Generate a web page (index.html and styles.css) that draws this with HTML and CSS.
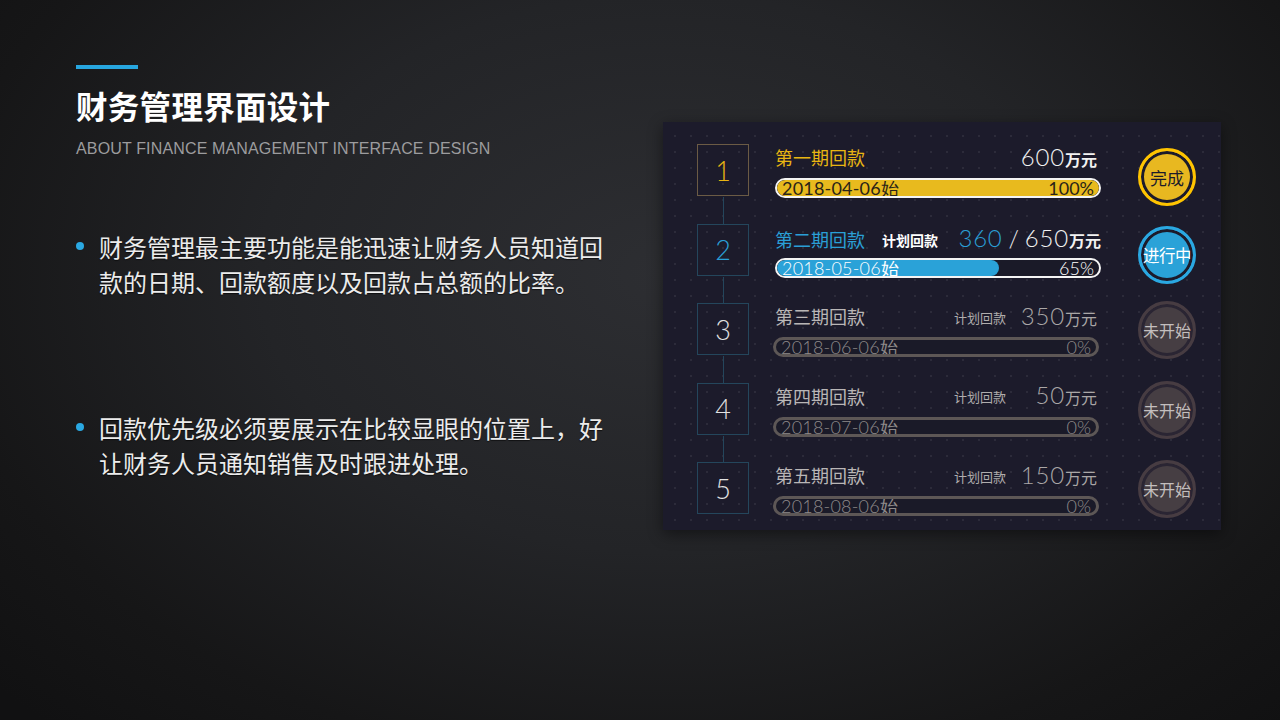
FILE: index.html
```html
<!DOCTYPE html>
<html lang="zh">
<head>
<meta charset="utf-8">
<title>财务管理界面设计</title>
<link rel="stylesheet" href="styles.css">
</head>
<body>
<div class="slide">
  <section class="left">
    <div class="accent"></div>
    <h1 class="title">财务管理界面设计</h1>
    <p class="subtitle">ABOUT FINANCE MANAGEMENT INTERFACE DESIGN</p>
    <ul class="points">
      <li class="point">财务管理最主要功能是能迅速让财务人员知道回款的日期、回款额度以及回款占总额的比率。</li>
      <li class="point">回款优先级必须要展示在比较显眼的位置上，好让财务人员通知销售及时跟进处理。</li>
    </ul>
  </section>
  <section class="card">
    <div class="row done">
      <div class="step">1</div>
      <div class="info">
        <div class="head">
          <span class="name">第一期回款</span>
          <span class="amount"><span class="num">600</span><span class="unit">万元</span></span>
        </div>
        <div class="bar"><div class="fill" style="width:100%"></div><span class="date">2018-04-06始</span><span class="pct">100%</span></div>
      </div>
      <div class="status">完成</div>
    </div>
    <div class="row doing">
      <div class="step">2</div>
      <div class="info">
        <div class="head">
          <span class="name">第二期回款</span>
          <span class="plan">计划回款</span>
          <span class="amount"><span class="num cur">360</span><span class="num slash">/</span><span class="num">650</span><span class="unit">万元</span></span>
        </div>
        <div class="bar"><div class="fill" style="width:69%"></div><span class="date">2018-05-06始</span><span class="pct">65%</span></div>
      </div>
      <div class="status">进行中</div>
    </div>
    <div class="row todo">
      <div class="step">3</div>
      <div class="info">
        <div class="head">
          <span class="name">第三期回款</span>
          <span class="plan">计划回款</span>
          <span class="amount"><span class="num">350</span><span class="unit">万元</span></span>
        </div>
        <div class="bar"><span class="date">2018-06-06始</span><span class="pct">0%</span></div>
      </div>
      <div class="status">未开始</div>
    </div>
    <div class="row todo">
      <div class="step">4</div>
      <div class="info">
        <div class="head">
          <span class="name">第四期回款</span>
          <span class="plan">计划回款</span>
          <span class="amount"><span class="num">50</span><span class="unit">万元</span></span>
        </div>
        <div class="bar"><span class="date">2018-07-06始</span><span class="pct">0%</span></div>
      </div>
      <div class="status">未开始</div>
    </div>
    <div class="row todo last">
      <div class="step">5</div>
      <div class="info">
        <div class="head">
          <span class="name">第五期回款</span>
          <span class="plan">计划回款</span>
          <span class="amount"><span class="num">150</span><span class="unit">万元</span></span>
        </div>
        <div class="bar"><span class="date">2018-08-06始</span><span class="pct">0%</span></div>
      </div>
      <div class="status">未开始</div>
    </div>
  </section>
</div>
</body>
</html>
```

FILE: styles.css
```css
* { box-sizing: border-box; }
html, body { margin: 0; padding: 0; }
body {
  width: 1280px;
  height: 720px;
  overflow: hidden;
  font-family: "Noto Sans CJK SC", "Noto Sans", sans-serif;
  background: radial-gradient(ellipse 900px 620px at 52% 38%, #2d2e32 0%, #232427 45%, #161617 80%, #111112 100%);
  color: #eee;
}
.slide {
  display: flex;
  width: 1280px;
  height: 720px;
}
.left {
  width: 663px;
  padding: 65px 0 0 76px;
}
.accent {
  width: 62px;
  height: 4px;
  background: #27a6df;
}
.title {
  margin: 16px 0 0 0;
  font-size: 31.5px;
  line-height: 40px;
  font-weight: 700;
  color: #fff;
  letter-spacing: 0.3px;
}
.subtitle {
  margin: 14px 0 0 0;
  font-family: "Liberation Sans", Arial, sans-serif;
  font-size: 16px;
  line-height: 20px;
  color: #9c9c9e;
  letter-spacing: 0.15px;
}
.points {
  list-style: none;
  margin: 70px 0 0 0;
  padding: 0;
}
.point {
  position: relative;
  padding-left: 23px;
  width: 545px;
  font-size: 24px;
  line-height: 35px;
  color: #ececec;
  text-shadow: 0 1px 1px rgba(0,0,0,0.6);
  margin-bottom: 111px;
}
.point::before {
  content: "";
  position: absolute;
  left: 0;
  top: 13px;
  width: 8px;
  height: 8px;
  border-radius: 50%;
  background: #2aa8e2;
}
.card {
  margin-top: 122px;
  width: 558px;
  height: 408px;
  padding: 22px 0 0 34px;
  background-color: #1c1b2b;
  background-image: radial-gradient(circle, rgba(255,255,255,0.07) 1px, transparent 1.4px);
  background-size: 16px 16px;
  background-position: 4px 6px;
  box-shadow: 0 4px 14px rgba(0,0,0,0.45);
}
.row {
  display: flex;
  align-items: flex-start;
  height: 79.5px;
}
.step {
  position: relative;
  flex: none;
  width: 52px;
  height: 52px;
  border: 1px solid #24465c;
  display: flex;
  align-items: center;
  justify-content: center;
  font-family: "Lato", "Inter", sans-serif;
  font-weight: 300;
  font-size: 27px;
  color: #e2e2e2;
}
.step::after {
  content: "";
  position: absolute;
  left: 25px;
  top: 52px;
  width: 1px;
  height: 27px;
  background: #24465c;
}
.last .step::after { display: none; }
.done .step { border-color: #6b5b45; color: #e8b512; }
.doing .step { color: #2a9fd6; }
.info {
  width: 326px;
  margin-left: 26px;
}
.head {
  display: flex;
  align-items: center;
  height: 26px;
  margin-bottom: 8px;
}
.doing .head { margin-top: 2px; margin-bottom: 6px; }
.name {
  font-size: 18px;
  line-height: 26px;
  color: #b9b6b6;
}
.done .name { color: #e8b512; }
.doing .name { color: #2a9fd6; }
.plan {
  margin-left: auto;
  font-size: 13px;
  line-height: 26px;
  padding-top: 3px;
  color: #b0adad;
}
.doing .plan { margin-left: 17px; color: #fff; font-weight: 700; font-size: 14px; }
.amount {
  display: flex;
  align-items: baseline;
  justify-content: flex-end;
  width: 95px;
  padding-right: 4px;
}
.done .amount { margin-left: auto; width: auto; }
.doing .amount { margin-left: auto; padding-right: 0; width: auto; }
.num {
  font-family: "Lato", "Inter", sans-serif;
  font-weight: 300;
  font-size: 24px;
  line-height: 26px;
  letter-spacing: 0.8px;
  color: #aaa7a7;
}
.done .num, .doing .num { color: #f2f2f2; }
.doing .num.cur { color: #2a9fd6; }
.num.slash { margin: 0 5px 0 6px; }
.unit {
  font-size: 16px;
  color: #aaa7a7;
}
.done .unit, .doing .unit { color: #f2f2f2; font-weight: 700; }
.bar {
  position: relative;
  display: flex;
  align-items: center;
  justify-content: space-between;
  height: 20px;
  border: 2px solid #f4f4f4;
  border-radius: 10px;
  background: #1a1a28;
  padding: 0 5px 0 5px;
  overflow: hidden;
}
.todo .bar {
  width: 326px;
  border: 3px solid #5d5756;
  margin-left: -2px;
}
.fill {
  position: absolute;
  left: 0;
  top: 0;
  bottom: 0;
  border-radius: 8px;
  background: #e8ba1e;
}
.doing .fill { background: #2aa2d8; }
.date, .pct {
  position: relative;
  font-family: "Lato", "Inter", sans-serif;
  font-weight: 300;
  font-size: 18px;
  line-height: 16px;
  color: #fff;
}
.date { letter-spacing: 0.2px; }
.done .date, .done .pct { color: #2a2418; font-weight: 400; }
.todo .date, .todo .pct { color: #8e8a8a; }
.status {
  flex: none;
  margin: 4px 0 0 37px;
  width: 58px;
  height: 58px;
  border-radius: 50%;
  border: 3px solid #ffc400;
  box-shadow: inset 0 0 0 3px #1c1b2b;
  background: #e8b820;
  display: flex;
  align-items: center;
  justify-content: center;
  font-size: 17px;
  color: #1c1b2b;
}
.doing .status {
  border-color: #2aa8e2;
  background: #2aa2d8;
  color: #fff;
  font-size: 16.5px;
  letter-spacing: -0.5px;
  margin-top: 2px;
}
.todo .status {
  border-color: #473c42;
  background: #463e43;
  box-shadow: inset 0 0 0 3px #2a2533;
  color: #c3bebe;
  font-size: 16px;
  margin-top: -2px;
}
```
